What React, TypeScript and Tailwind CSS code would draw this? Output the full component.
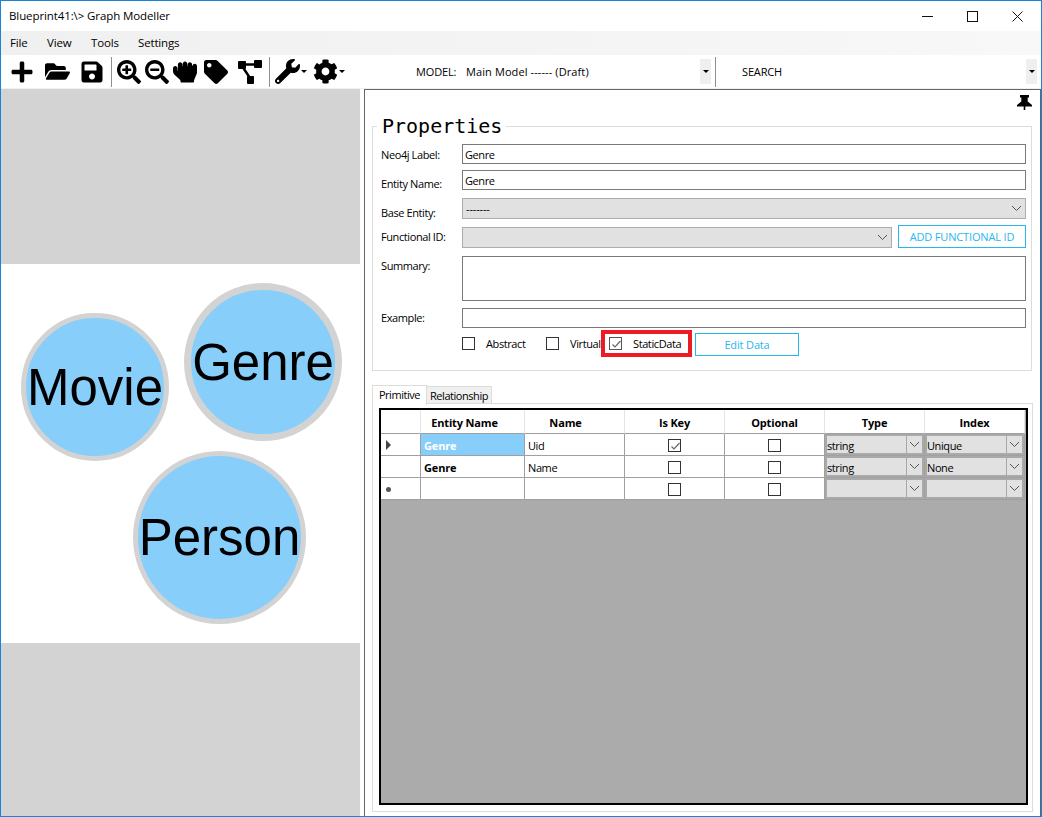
import React from "react";
import { FaPlus, FaFolderOpen, FaSave, FaSearchPlus, FaSearchMinus, FaHandRock, FaTag, FaWrench, FaCog } from "react-icons/fa";

const Chevron = ({ className = "" }: { className?: string }) => (
  <svg width="11" height="7" viewBox="0 0 11 7" className={className} fill="none" stroke="#555" strokeWidth="1">
    <path d="M1 1l4.5 4.5L10 1" />
  </svg>
);

const Check = () => (
  <svg width="13" height="13" viewBox="0 0 13 13" className="block" fill="none" stroke="#666" strokeWidth="1.2">
    <path d="M2.5 6.5l2.5 2.5 5.5-6" />
  </svg>
);

const Checkbox = ({ checked = false, cls = "border-[#333]" }: { checked?: boolean; cls?: string }) => (
  <div className={`w-[11px] h-[11px] box-content border bg-white shrink-0 ${cls}`}>{checked && <Check />}</div>
);

const Caret = () => <div className="w-0 h-0 border-x-[3px] border-x-transparent border-t-[3px] border-t-black" />;

const Label = ({ children, className = "" }: { children: React.ReactNode; className?: string }) => (
  <div className={`w-[81px] shrink-0 tracking-[-0.4px] ${className}`}>{children}</div>
);

const Field = ({ children, className = "" }: { children?: React.ReactNode; className?: string }) => (
  <div className={`flex-1 self-stretch border border-[#7a7a7a] bg-white px-[2px] flex items-center tracking-[-0.4px] ${className}`}>{children}</div>
);

const Sel = ({ children, className = "" }: { children?: React.ReactNode; className?: string }) => (
  <div className={`border border-[#adadad] bg-[#e1e1e1] flex items-center justify-between pl-[3px] pr-[3px] ${className}`}>
    <span>{children}</span>
    <Chevron />
  </div>
);

const HeadCell = ({ children, className = "" }: { children?: React.ReactNode; className?: string }) => (
  <div className={`flex items-center justify-center font-bold pt-[1px] border-r border-[#e4e4e4] border-b border-b-[#a0a0a0] bg-white ${className}`}>{children}</div>
);

const Cell = ({ children, className = "" }: { children?: React.ReactNode; className?: string }) => (
  <div className={`flex items-center pt-[1px] border-r border-b border-[#a0a0a0] bg-white ${className}`}>{children}</div>
);

const GridSel = ({ children }: { children?: React.ReactNode }) => (
  <div className="border-r border-b border-[#a0a0a0] bg-white">
    <div className="h-full flex border-2 border-[#a9a9a9] bg-[#e1e1e1] tracking-[-0.4px]">
      <div className="flex-1 flex items-center pt-[1px]">{children}</div>
      <div className="w-[16px] border-l border-[#a9a9a9] flex items-center justify-center"><Chevron /></div>
    </div>
  </div>
);

const Row = ({ head, entity, selected, name, isKey, type, index }: { head?: React.ReactNode; entity?: string; selected?: boolean; name?: string; isKey?: boolean; type?: string; index?: string }) => (
  <>
    <Cell className="pl-[5px]">{head}</Cell>
    <Cell className={`pl-[3px] font-bold ${selected ? "!bg-[#87cefa] text-white" : ""}`}>{entity}</Cell>
    <Cell className="pl-[3px] tracking-[-0.4px]">{name}</Cell>
    <Cell className="justify-center"><Checkbox checked={isKey} /></Cell>
    <Cell className="justify-center"><Checkbox /></Cell>
    <GridSel>{type}</GridSel>
    <GridSel>{index}</GridSel>
  </>
);

const Circle = ({ label, className }: { label: string; className: string }) => (
  <div className={`absolute rounded-full bg-[#87cefa] border-[#d3d3d3] flex items-center justify-center text-[51px] text-black font-['Liberation_Sans',sans-serif] tracking-normal ${className}`}>{label}</div>
);

const Sep = ({ className = "" }: { className?: string }) => <div className={`w-px h-[30px] bg-[#8f8f8f] ${className}`} />;

const DiagramIcon = ({ className = "" }: { className?: string }) => (
  <svg width="24" height="24" viewBox="0 0 24 24" className={className}>
    <rect x="0" y="1" width="8" height="8" rx="1" />
    <rect x="16" y="0" width="8" height="8" rx="1" />
    <rect x="9" y="16" width="7" height="8" rx="1" />
    <path d="M6 4.5h12M4 6l8 12" stroke="#000" strokeWidth="2.4" fill="none" />
  </svg>
);

const PinIcon = ({ className = "" }: { className?: string }) => (
  <svg width="15" height="15" viewBox="0 0 15 15" className={className}>
    <path d="M3 0h9v2.5h-1.3V6.5L15 10v1.5H8.3V15H6.7v-3.5H0V10l4.3-3.5V2.5H3z" />
  </svg>
);

export default function App() {
  return (
    <div className="w-[1042px] h-[817px] border border-[#1883d7] bg-white flex flex-col overflow-hidden text-[11px] leading-none text-black font-['Open_Sans',sans-serif] tracking-[-0.15px]">
      {/* Title bar */}
      <div className="h-[30px] shrink-0 flex items-center justify-between pl-[8px]">
        <span className="text-[11.5px] tracking-[-0.1px]">Blueprint41:\&gt; Graph Modeller</span>
        <div className="flex items-center mr-[1px]">
          <div className="w-[45px] h-[30px] flex items-center justify-center">
            <svg width="11" height="11" viewBox="0 0 11 11"><path d="M0 5.5h11" stroke="#111" strokeWidth="1" /></svg>
          </div>
          <div className="w-[45px] h-[30px] flex items-center justify-center">
            <svg width="11" height="11" viewBox="0 0 11 11"><rect x=".5" y=".5" width="10" height="10" fill="none" stroke="#111" /></svg>
          </div>
          <div className="w-[45px] h-[30px] flex items-center justify-center">
            <svg width="11" height="11" viewBox="0 0 11 11"><path d="M.5.5l10 10M10.5.5l-10 10" stroke="#111" /></svg>
          </div>
        </div>
      </div>
      {/* Menu */}
      <div className="h-[24px] shrink-0 flex items-center bg-gradient-to-r from-[#f0f0f0] to-[#f8f8f8] pl-[9px] text-[11.5px]">
        <span className="w-[37px]">File</span>
        <span className="w-[44px]">View</span>
        <span className="w-[47px]">Tools</span>
        <span>Settings</span>
      </div>
      {/* Toolbar */}
      <div className="h-[34px] shrink-0 flex items-center border-b border-[#f0f0f0] pl-[9px]">
        <FaPlus size={24} className="mr-[11px]" />
        <FaFolderOpen size={25} className="mr-[10px]" />
        <FaSave size={24} className="mr-[7px]" />
        <Sep className="mr-[5px]" />
        <FaSearchPlus size={24} className="mr-[4px]" />
        <FaSearchMinus size={24} className="mr-[4px]" />
        <FaHandRock size={24} className="mr-[7px]" />
        <FaTag size={24} className="mr-[10px]" />
        <DiagramIcon className="mr-[7px]" />
        <Sep className="mr-[5px]" />
        <FaWrench size={25} className="mr-[1px]" />
        <Caret />
        <FaCog size={25} className="ml-[6px] mr-[1px]" />
        <Caret />
        <span className="ml-[71px] w-[50px]">MODEL:</span>
        <span className="w-[234px] tracking-[0.1px]">Main Model ------ (Draft)</span>
        <div className="w-[11px] h-[25px] bg-[#efefef] flex items-center justify-center"><Caret /></div>
        <Sep className="ml-[4px] mr-[26px]" />
        <span className="w-[284px]">SEARCH</span>
        <div className="w-[11px] h-[25px] bg-[#efefef] flex items-center justify-center"><Caret /></div>
      </div>
      {/* Main */}
      <div className="flex-1 flex min-h-0">
        {/* Canvas */}
        <div className="w-[359px] shrink-0 flex flex-col">
          <div className="h-[175px] bg-[#d3d3d3]" />
          <div className="h-[379px] bg-white relative">
            <Circle label="Movie" className="left-[20px] top-[49px] w-[148px] h-[148px] border-[5px]" />
            <Circle label="Genre" className="left-[183px] top-[19px] w-[158px] h-[158px] border-[7px]" />
            <Circle label="Person" className="left-[132px] top-[187px] w-[173px] h-[173px] border-[5px]" />
          </div>
          <div className="flex-1 bg-[#d3d3d3]" />
        </div>
        {/* Right panel */}
        <div className="flex-1 ml-[4px] border-l border-t border-r border-[#666] pl-[7px] pr-[7px] flex flex-col relative min-h-0">
          <PinIcon className="absolute right-[8px] top-[5px]" />
          <fieldset className="mt-[26px] h-[255px] w-[660px] border border-[#dcdcdc] pl-[8px] pr-[5px] shrink-0">
            <legend className="ml-[-4px] pl-[5px] pr-[4px] text-[20px] leading-[20px] tracking-normal font-['DejaVu_Sans_Mono',monospace]">Properties</legend>
            <div className="flex h-[20px] mt-[8px] items-center">
              <Label>Neo4j Label:</Label>
              <Field>Genre</Field>
            </div>
            <div className="flex h-[20px] mt-[6px] items-center">
              <Label className="pt-[6px]">Entity Name:</Label>
              <Field>Genre</Field>
            </div>
            <div className="flex h-[21px] mt-[8px] items-center">
              <Label className="pt-[8px]">Base Entity:</Label>
              <Sel className="flex-1 h-[21px]">-------</Sel>
            </div>
            <div className="flex h-[23px] mt-[6px] items-end">
              <Label className="pb-[6px]">Functional ID:</Label>
              <Sel className="w-[430px] h-[21px]" />
              <button className="ml-[6px] flex-1 h-[23px] border border-[#29b6ef] text-[#29b6ef] bg-white">ADD FUNCTIONAL ID</button>
            </div>
            <div className="flex h-[45px] mt-[8px]">
              <Label className="pt-[4px]">Summary:</Label>
              <Field />
            </div>
            <div className="flex h-[20px] mt-[7px] items-center">
              <Label className="pb-[2px]">Example:</Label>
              <Field />
            </div>
            <div className="flex items-center h-[29px] mt-[1px] pl-[81px] tracking-[-0.4px]">
              <Checkbox />
              <span className="ml-[11px] w-[60px]">Abstract</span>
              <Checkbox />
              <span className="ml-[11px] w-[28px]">Virtual</span>
              <div className="ml-[3px] w-[91px] h-[27px] border-[4px] border-[#ed1c24] flex items-center pl-[4px] bg-white">
                <Checkbox checked cls="border-[#555]" />
                <span className="ml-[11px]">StaticData</span>
              </div>
              <button className="ml-[3px] mt-[2px] w-[104px] h-[23px] border border-[#29b6ef] text-[#29b6ef] bg-white tracking-[-0.15px]">Edit Data</button>
            </div>
          </fieldset>
          {/* Tabs */}
          <div className="flex items-end h-[20px] mt-[13px] shrink-0 tracking-[-0.45px]">
            <div className="w-[55px] h-[20px] pb-[2px] border border-b-0 border-[#dcdcdc] bg-white flex items-center justify-center relative z-10 -mb-px">Primitive</div>
            <div className="w-[65px] h-[18px] border border-l-0 border-[#dcdcdc] bg-[#f0f0f0] flex items-center justify-center">Relationship</div>
          </div>
          <div className="flex-1 mb-[4px] border border-[#dcdcdc] -mt-px pl-[6px] pr-[4px] pt-[4px] pb-[6px] flex min-h-0 w-[661px]">
            <div className="flex-1 border-2 border-black bg-[#ababab] flex flex-col">
              <div className="grid grid-cols-[40px_104px_100px_100px_100px_100px_100px] grid-rows-[24px_22px_22px_22px] shrink-0 bg-white w-[644px]">
                <HeadCell />
                <HeadCell className="pr-[16px]">Entity Name</HeadCell>
                <HeadCell className="pr-[18px]">Name</HeadCell>
                <HeadCell>Is Key</HeadCell>
                <HeadCell>Optional</HeadCell>
                <HeadCell>Type</HeadCell>
                <HeadCell>Index</HeadCell>
                <Row
                  head={<div className="w-0 h-0 border-y-[5px] border-y-transparent border-l-[5px] border-l-[#444]" />}
                  entity="Genre"
                  selected
                  name="Uid"
                  isKey
                  type="string"
                  index="Unique"
                />
                <Row entity="Genre" name="Name" type="string" index="None" />
                <Row head={<div className="w-[5px] h-[5px] rounded-full bg-[#555]" />} />
              </div>
            </div>
          </div>
        </div>
      </div>
    </div>
  );
}
